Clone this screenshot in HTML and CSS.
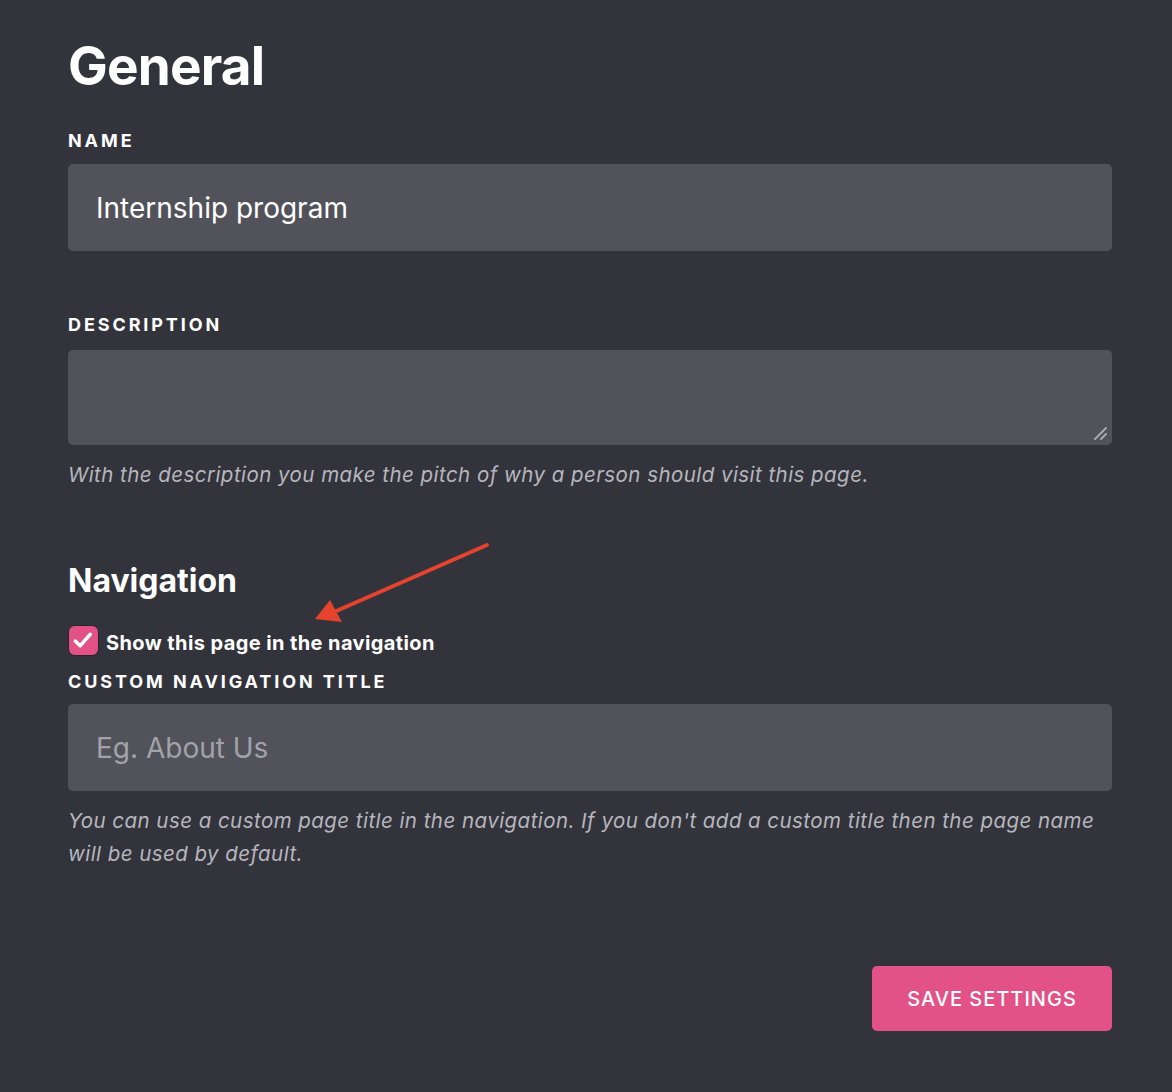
FILE: index.html
```html
<!DOCTYPE html>
<html lang="en">
<head>
<meta charset="utf-8">
<title>General settings</title>
<link rel="stylesheet" href="styles.css">
</head>
<body>
<main class="page">
  <h1 class="title">General</h1>

  <div class="field field-name">
    <label class="label" for="name">NAME</label>
    <div class="input" id="name">Internship program</div>
  </div>

  <div class="field field-desc">
    <label class="label" for="desc">DESCRIPTION</label>
    <div class="textarea" id="desc">
      <svg class="grip" width="14" height="14" viewBox="0 0 14 14"><path d="M2 13 L13 2 M8 13 L13 8" stroke="#9a9aa2" stroke-width="2.2" stroke-linecap="round"/><path d="M2 13 L13 2 M8 13 L13 8" stroke="#c0c0c6" stroke-width="0.8" stroke-linecap="round"/></svg>
    </div>
    <p class="hint">With the description you make the pitch of why a person should visit this page.</p>
  </div>

  <section class="nav-section">
    <h2 class="subtitle">Navigation</h2>
    <label class="check">
      <span class="box"><svg width="30" height="30" viewBox="0 0 30 30"><path d="M6.5 15 L11.5 20 L22 8" fill="none" stroke="#fff" stroke-width="3.6" stroke-linecap="round" stroke-linejoin="round"/></svg></span>
      <span class="check-text">Show this page in the navigation</span>
    </label>
    <div class="field field-custom">
      <label class="label" for="navtitle">CUSTOM NAVIGATION TITLE</label>
      <div class="input placeholder" id="navtitle">Eg. About Us</div>
      <p class="hint">You can use a custom page title in the navigation. If you don't add a custom title then the page name will be used by default.</p>
    </div>
  </section>

  <div class="actions">
    <button class="save">SAVE SETTINGS</button>
  </div>

  <svg class="arrow" width="200" height="90" viewBox="0 0 200 90">
    <line x1="185" y1="5" x2="32" y2="72" stroke="#e5432d" stroke-width="4" stroke-linecap="round"/>
    <polygon points="13,79 28,60 40,82" fill="#e5432d"/>
  </svg>
</main>
</body>
</html>
```

FILE: styles.css
```css
html, body {
  margin: 0;
  padding: 0;
  background: #33333c;
}
body {
  font-family: Inter, "Noto Sans", "Liberation Sans", sans-serif;
  color: #ffffff;
}
.page {
  position: relative;
  width: 1044px;
  padding: 35px 0 40px 68px;
}
.title {
  margin: 0;
  font-size: 53px;
  font-weight: 700;
  line-height: 62px;
  letter-spacing: -0.8px;
}
.field {
  display: flex;
  flex-direction: column;
}
.label {
  font-size: 18px;
  font-weight: 700;
  letter-spacing: 2.9px;
  line-height: 20px;
}
.field-name .label {
  margin: 34px 0 13px;
}
.field-desc .label {
  margin: 64px 0 15px;
}
.field-custom .label {
  margin: 16px 0 12px;
}
.input {
  height: 87px;
  box-sizing: border-box;
  background: #52525b;
  border-radius: 5px;
  padding: 0 28px;
  display: flex;
  align-items: center;
  font-size: 28px;
  color: #ffffff;
}
.input.placeholder {
  color: #a2a2a9;
}
.textarea {
  position: relative;
  height: 95px;
  background: #52525b;
  border-radius: 5px;
}
.grip {
  position: absolute;
  right: 5px;
  bottom: 5px;
}
.hint {
  margin: 13px 0 0;
  font-size: 20.5px;
  font-style: italic;
  letter-spacing: 0.45px;
  color: #b6b6bd;
  line-height: 33px;
}
.nav-section {
  margin-top: 70px;
}
.subtitle {
  margin: 0;
  font-size: 32px;
  font-weight: 700;
  line-height: 40px;
}
.check {
  display: flex;
  align-items: center;
  gap: 7px;
  margin-top: 24px;
  height: 31px;
}
.box {
  width: 31px;
  height: 31px;
  box-sizing: border-box;
  border: 1.5px solid #25252b;
  border-radius: 7px;
  background: #e25286;
  display: flex;
  align-items: center;
  justify-content: center;
}
.check-text {
  font-size: 20px;
  font-weight: 700;
  letter-spacing: 0.4px;
  margin-top: 4px;
}
.actions {
  display: flex;
  justify-content: flex-end;
  margin-top: 96px;
}
.save {
  width: 240px;
  height: 65px;
  border: none;
  border-radius: 5px;
  background: #e25286;
  color: #ffffff;
  font-family: Inter, "Noto Sans", "Liberation Sans", sans-serif;
  font-size: 20px;
  font-weight: 500;
  letter-spacing: 1px;
}
.arrow {
  position: absolute;
  left: 302px;
  top: 540px;
}
```
